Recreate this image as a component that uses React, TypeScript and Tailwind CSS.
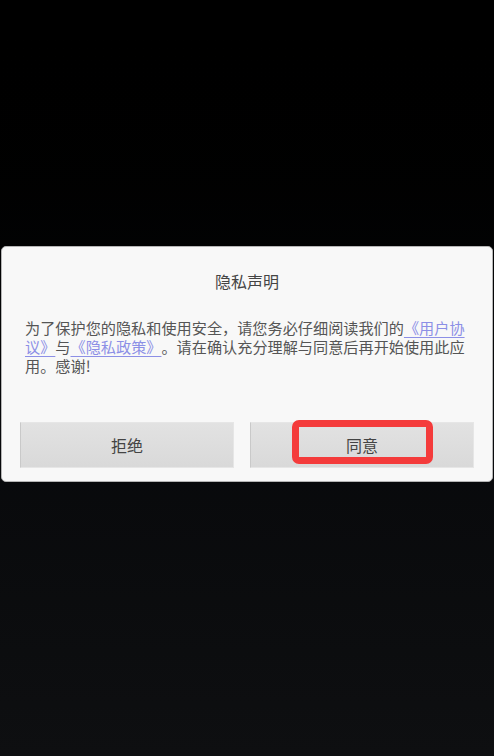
import React from "react";

const font = { fontFamily: '"Noto Sans CJK SC", "Noto Sans", sans-serif' };

export default function App() {
  return (
    <div
      className="flex h-[756px] w-[494px] flex-col bg-gradient-to-b from-[#000000] via-[#07080a] to-[#0e0f11]"
      style={font}
    >
      <div className="mt-[246px] ml-px w-[492px] rounded-[5px] border border-[#b5b5b5] bg-[#f8f8f8]">
        <h1 className="pt-[23px] text-center text-[16px] leading-[22px] text-[#444]">
          隐私声明
        </h1>
        <p className="mt-[26px] px-[23px] text-[15.16px] leading-[19px] text-[#555] [font-kerning:none] [font-feature-settings:'kern'_0,'halt'_0,'chws'_0] [text-spacing-trim:space-all]">
          为了保护您的隐私和使用安全，请您务必仔细阅读我们的
          <span className="text-[#8c8fe6] underline decoration-1 underline-offset-[3px]">
            《用户协议》
          </span>
          与
          <span className="text-[#8c8fe6] underline decoration-1 underline-offset-[3px]">
            《隐私政策》
          </span>
          。请在确认充分理解与同意后再开始使用此应
          <br />
          用。感谢!
        </p>
        <div className="mt-[47px] mb-[13px] flex gap-4 px-[18px]">
          <button className="h-[46px] w-[214px] border border-[#e6e6e6] border-l-[#c9c9c9] bg-gradient-to-b from-[#e2e2e2] to-[#d9d9d9] text-[16px] text-[#444]">
            拒绝
          </button>
          <div className="relative flex-1">
            <button className="h-[46px] w-full border border-[#e6e6e6] border-l-[#c9c9c9] bg-gradient-to-b from-[#e2e2e2] to-[#d9d9d9] text-[16px] text-[#444]">
              同意
            </button>
            <div className="absolute top-[-2px] left-[42px] h-[44px] w-[141px] rounded-[7px] border-[7px] border-[#f43b3b]" />
          </div>
        </div>
      </div>
    </div>
  );
}
